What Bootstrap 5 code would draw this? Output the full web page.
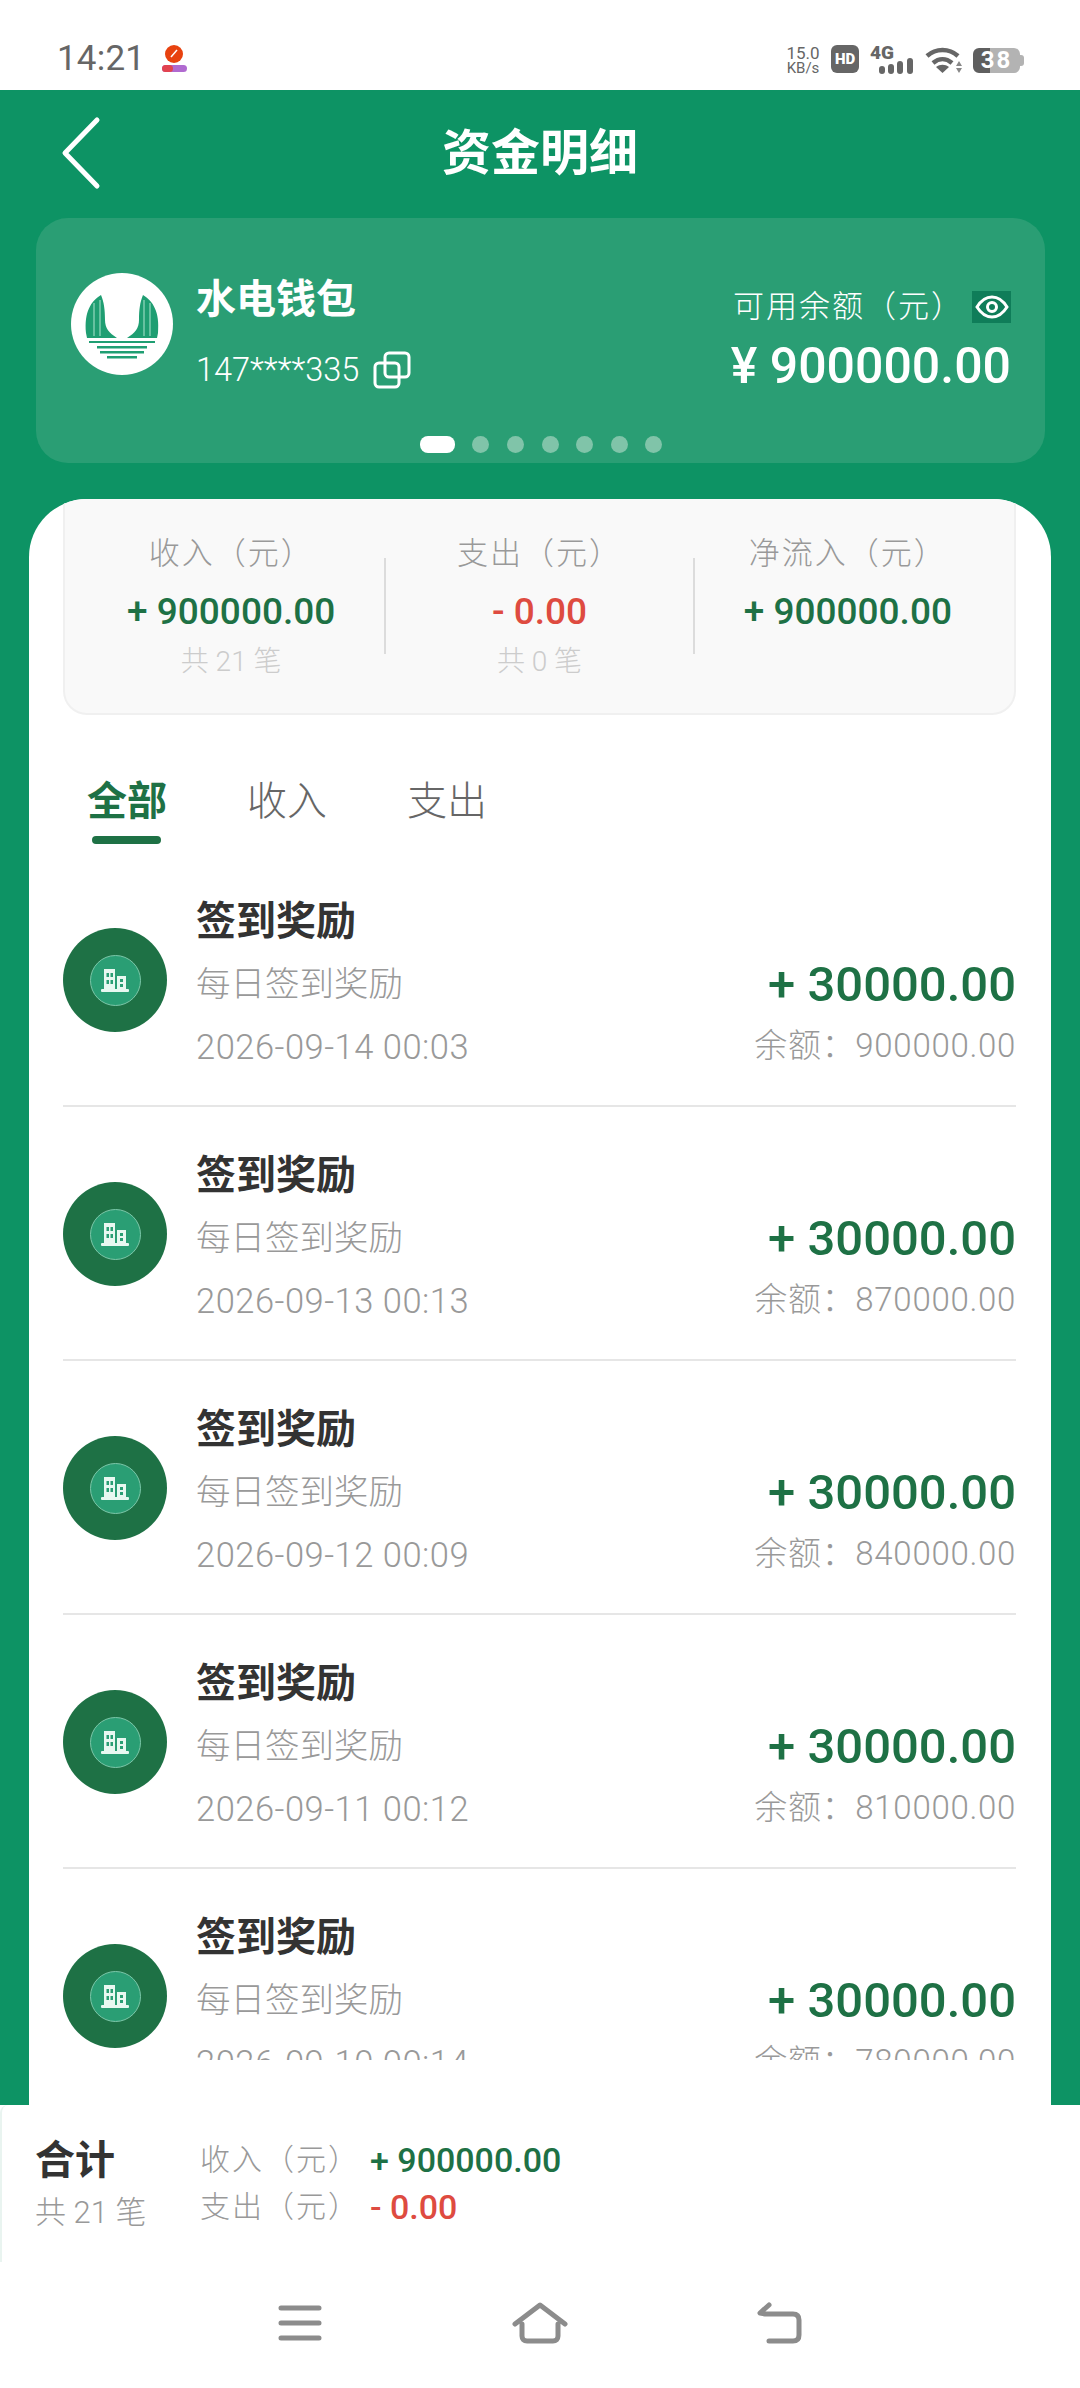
<!DOCTYPE html>
<html lang="zh">
<head>
  <meta charset="UTF-8" />
  <title>资金明细</title>
  <meta name="viewport" content="width=device-width, initial-scale=1">
  <link href="https://cdn.jsdelivr.net/npm/bootstrap@5.3.3/dist/css/bootstrap.min.css" rel="stylesheet">
  <style>
    html, body { margin: 0; background: #fff; }
    body { width: 1080px; height: 2388px; overflow: hidden; font-family: Roboto, "Noto Sans CJK SC", sans-serif; color: #333; }
    .status-row { height: 90px; padding: 44px 56px 0 57px; background: #fff; color: #666; }
    .clock { font-size: 35px; line-height: 30px; letter-spacing: .2px; }
    .speed { width: 36px; margin-left: auto; font-size: 17px; line-height: 18px; text-align: center; }
    .speed small { display: block; font-size: 15px; line-height: 13px; }
    .hd-tag { width: 28px; height: 28px; margin: 1px 0 0 10px; border-radius: 6px; background: #666; color: #fff; font-size: 15px; font-weight: 900; line-height: 28px; text-align: center; }
    .net-tag { position: relative; width: 45px; height: 30px; margin-left: 11px; }
    .net-tag b { position: absolute; left: 0; top: 1px; font-size: 19px; font-weight: 900; line-height: 15px; }
    .wifi-mark { margin: 3px 0 0 10px; }
    .batt { position: relative; width: 47px; height: 25px; margin: 4px 4px 0 10px; border-radius: 6px; background: linear-gradient(90deg, #5f5f5f 36%, #b3b3b3 36%); color: #fff; font-size: 24px; font-weight: 700; line-height: 25px; letter-spacing: 2px; text-align: center; }
    .batt::after { content: ""; position: absolute; left: 47px; top: 7px; width: 4px; height: 11px; border-radius: 0 3px 3px 0; background: #b3b3b3; }
    .green-area { height: 2015px; background: #0d9364; }
    .head-row { position: relative; height: 128px; }
    .back-btn { position: absolute; left: 60px; top: 25px; }
    .head-title { padding-top: 34px; font-size: 49px; font-weight: 700; line-height: 60px; color: #fff; text-align: center; }
    .wallet { height: 245px; margin: 0 35px 36px 36px; padding: 55px 34px 0 35px; border-radius: 32px; background: #2a9e74; color: #fff; }
    .wallet-top { height: 163px; }
    .wallet-logo { width: 102px; height: 102px; flex: none; }
    .wallet-name { margin-left: 23px; }
    .wallet-name h2 { margin: 2px 0 -2px; font-size: 40px; font-weight: 700; line-height: 50px; }
    .phone-line { margin-top: 27px; font-size: 32.5px; font-weight: 300; line-height: 40px; }
    .phone-line svg { margin-left: 14px; }
    .bal-label { font-size: 31px; line-height: 40px; font-weight: 300; letter-spacing: 2px; }
    .bal-row { margin-top: 14px; }
    .eye-box { width: 39px; height: 32px; margin-left: 8px; background: #0f7d59; }
    .bal-num { margin-top: 14px; font-size: 50px; font-weight: 500; line-height: 50px; }
    .dot-row { height: 17px; gap: 17.6px; }
    .dot-row i { width: 17px; height: 17px; border-radius: 50%; background: #80c4a9; }
    .dot-row i.on { width: 35px; border-radius: 8px; background: #fff; }
    .sheet { height: 1606px; margin: 0 29px; padding: 0 35px 0 34px; border-radius: 58px 58px 0 0; background: #fff; overflow: hidden; }
    .sum-box { height: 216px; padding: 0 13px; border: 2px solid #f0f0f0; border-top: 0; border-radius: 0 0 24px 24px; background: #f9f9f9; }
    .sum-col { flex: 1 1 0; padding-top: 35px; text-align: center; }
    .sum-rule { width: 2px; height: 96px; margin-top: 59px; flex: none; background: #dcdcdc; }
    .sum-label { font-size: 31px; line-height: 40px; color: #999; font-weight: 300; letter-spacing: 2px; }
    .sum-val { margin-top: 16px; font-size: 37px; font-weight: 500; line-height: 44px; }
    .sum-count { margin-top: 10px; font-size: 28px; line-height: 36px; color: #ccc; font-weight: 300; }
    .up-text { color: #1e7145; }
    .down-text { color: #de4b40; }
    .tab-row { gap: 80px; height: 138px; padding: 62px 0 0 24px; font-size: 40px; line-height: 50px; color: #666; font-weight: 300; }
    .tab-on { position: relative; font-weight: 700; color: #1e7145; }
    .tab-on::after { content: ""; position: absolute; left: 5px; right: 6px; top: 59px; height: 8px; border-radius: 4px; background: #1e7145; }
    .flow-list { height: 1207px; overflow: hidden; }
    .flow-item { height: 254px; padding-top: 43px; border-bottom: 2px solid #e6e6e6; }
    .coin { width: 104px; height: 104px; margin-top: 32px; flex: none; border-radius: 50%; background: #1e7145; }
    .coin span { width: 51px; height: 51px; border: 1px solid #7cc7a9; border-radius: 50%; background: #2a9e74; }
    .flow-main { margin-left: 29px; }
    .flow-main h3 { margin: 0; font-size: 40px; font-weight: 700; line-height: 52px; color: #333; }
    .flow-main p { margin: 10px 0 0; font-size: 34.5px; font-weight: 300; line-height: 52px; color: #999; }
    .flow-main p + p { margin-top: 11px; letter-spacing: .5px; }
    .flow-side { margin-left: auto; padding-top: 58px; text-align: right; }
    .flow-amt { font-size: 49px; font-weight: 500; line-height: 62px; color: #1e7145; }
    .flow-left { margin-top: 4px; font-size: 33px; font-weight: 300; line-height: 52px; letter-spacing: .7px; color: #999; }
    .total-bar { height: 157px; padding: 33px 0 0 33px; border-left: 2px solid #e9f4f0; border-radius: 8px 8px 0 0; background: #fff; }
    .total-name { width: 165px; }
    .total-name b { display: block; font-size: 40px; line-height: 46px; color: #333; }
    .total-name span { display: block; margin-top: 9px; font-size: 31px; line-height: 40px; font-weight: 300; color: #999; }
    .total-line { height: 47px; font-size: 30px; line-height: 44px; font-weight: 300; letter-spacing: 2px; color: #999; }
    .total-line b { margin-left: 10px; font-size: 34px; font-weight: 500; letter-spacing: 0; }
    .nav-cell { width: 240px; height: 122px; }
  </style>
</head>
<body>
  <div class="status-row d-flex align-items-start">
    <span class="clock">14:21</span>
    <svg class="ms-3" width="27" height="29" viewBox="0 0 27 29"><circle cx="13" cy="10" r="9" fill="#e8420f"/><path d="M10 13l6-7" stroke="#fff" stroke-width="1.500"/><rect x="1" y="21" width="25" height="7" rx="3.500" fill="#b06ad0"/><rect x="1" y="21" width="11" height="7" rx="3.500" fill="#e2434f"/></svg>
    <div class="speed">15.0<small>KB/s</small></div>
    <div class="hd-tag">HD</div>
    <div class="net-tag"><b>4G</b>
      <svg width="45" height="30" viewBox="0 0 45 30"><g fill="#666"><rect x="9" y="22" width="6" height="8" rx="3"/><rect x="18" y="20" width="6" height="10" rx="3"/><rect x="27" y="17" width="6" height="13" rx="3"/><rect x="37" y="14" width="6" height="16" rx="3"/></g></svg>
    </div>
    <svg class="wifi-mark" width="38" height="27" viewBox="0 0 38 27"><g fill="none" stroke="#666" stroke-width="4.500"><path d="M2 9c9-8 22-8 31 0"/><path d="M8 16c6-5 13-5 19 0"/></g><path d="M11 20c4-3 9-3 13 0l-6.500 6z" fill="#666"/><path d="M34 14l3 5h-6zM34 26l3-5h-6z" fill="#888"/></svg>
    <div class="batt">38</div>
  </div>

  <div class="green-area">
    <div class="head-row">
      <svg class="back-btn" width="42" height="76" viewBox="0 0 42 76"><path d="M37 5L5 38l32 33" fill="none" stroke="#fff" stroke-width="5" stroke-linecap="round" stroke-linejoin="round"/></svg>
      <div class="head-title">资金明细</div>
    </div>

    <div class="wallet">
      <div class="wallet-top d-flex">
        <svg class="wallet-logo" viewBox="0 0 102 102"><circle cx="51" cy="51" r="51" fill="#fff"/><g fill="#1f9e72"><path d="M30 22c-10 6-17 17-15 38l1 5h30c-8-5-12-10-12-18 0-10-1-18-4-25z"/><path d="M72 22c10 6 17 17 15 38l-1 5H56c8-5 12-10 12-18 0-10 1-18 4-25z"/><rect x="18" y="68" width="66" height="2"/><rect x="26" y="73" width="50" height="2.500"/><rect x="29" y="78" width="44" height="2.500"/><rect x="36" y="83" width="30" height="2.500"/></g><g stroke="#7fcdb0" stroke-width="1.500"><path d="M23 30v33M29 27v36M73 27v36M79 30v33"/></g></svg>
        <div class="wallet-name">
          <h2>水电钱包</h2>
          <div class="phone-line d-flex align-items-center">147****335
            <svg width="38" height="38" viewBox="0 0 38 38"><g fill="none" stroke="#fff" stroke-width="3"><rect x="12" y="2" width="24" height="24" rx="4"/><rect x="2" y="12" width="24" height="24" rx="4"/></g></svg>
          </div>
        </div>
        <div class="ms-auto text-end">
          <div class="bal-row d-flex align-items-center justify-content-end">
            <span class="bal-label">可用余额（元）</span>
            <span class="eye-box d-flex align-items-center justify-content-center">
              <svg width="34" height="24" viewBox="0 0 34 24"><path d="M2 12C7 4 12 2 17 2s10 2 15 10c-5 8-10 10-15 10S7 20 2 12z" fill="none" stroke="#fff" stroke-width="3"/><circle cx="17" cy="12" r="4.500" fill="none" stroke="#fff" stroke-width="3"/></svg>
            </span>
          </div>
          <div class="bal-num">¥ 900000.00</div>
        </div>
      </div>
      <div class="dot-row d-flex justify-content-center">
        <i class="on"></i><i></i><i></i><i></i><i></i><i></i><i></i>
      </div>
    </div>

    <div class="sheet">
      <div class="sum-box d-flex">
        <div class="sum-col"><div class="sum-label">收入（元）</div><div class="sum-val up-text">+ 900000.00</div><div class="sum-count">共 21 笔</div></div>
        <div class="sum-rule"></div>
        <div class="sum-col"><div class="sum-label">支出（元）</div><div class="sum-val down-text">- 0.00</div><div class="sum-count">共 0 笔</div></div>
        <div class="sum-rule"></div>
        <div class="sum-col"><div class="sum-label">净流入（元）</div><div class="sum-val up-text">+ 900000.00</div></div>
      </div>

      <div class="tab-row d-flex">
        <span class="tab-on">全部</span><span>收入</span><span>支出</span>
      </div>

      <div class="flow-list" id="flowList"></div>
    </div>
  </div>

  <div class="total-bar d-flex">
    <div class="total-name"><b>合计</b><span>共 21 笔</span></div>
    <div>
      <div class="total-line d-flex"><span>收入（元）</span><b class="up-text">+ 900000.00</b></div>
      <div class="total-line d-flex"><span>支出（元）</span><b class="down-text">- 0.00</b></div>
    </div>
  </div>

  <div class="d-flex justify-content-center">
    <div class="nav-cell d-flex align-items-center justify-content-center"><svg width="44" height="36" viewBox="0 0 44 36"><g stroke="#8c8c8c" stroke-width="5" stroke-linecap="round"><path d="M3 3h38M3 18h38M3 33h38"/></g></svg></div>
    <div class="nav-cell d-flex align-items-center justify-content-center"><svg width="56" height="42" viewBox="0 0 56 42"><path d="M3 22L28 3l25 19M10 22v12c0 3 2 5 5 5h26c3 0 5-2 5-5V22" fill="none" stroke="#8c8c8c" stroke-width="5" stroke-linecap="round" stroke-linejoin="round"/></svg></div>
    <div class="nav-cell d-flex align-items-center justify-content-center"><svg width="48" height="42" viewBox="0 0 48 42"><path d="M13 3L4 11l5 1h28c4 0 6 2 6 6v15c0 4-2 6-6 6H13" fill="none" stroke="#8c8c8c" stroke-width="5" stroke-linecap="round" stroke-linejoin="round"/></svg></div>
  </div>

  <script>
    // 流水列表
    const flows = [
      ['2026-09-14 00:03', '900000.00'],
      ['2026-09-13 00:13', '870000.00'],
      ['2026-09-12 00:09', '840000.00'],
      ['2026-09-11 00:12', '810000.00'],
      ['2026-09-10 00:14', '780000.00']
    ];
    const building = '<svg width="28" height="24" viewBox="0 0 28 24"><g fill="#e8f8f1"><path d="M3 1h11v20H3z"/><path d="M16 8h9v13h-9z"/><rect y="21" width="28" height="3" rx="1"/></g><g fill="#2a9e74"><rect x="5.500" y="5" width="2.500" height="4"/><rect x="9.500" y="5" width="2.500" height="4"/><rect x="5.500" y="12" width="2.500" height="4"/><rect x="9.500" y="12" width="2.500" height="4"/><rect x="19" y="11" width="3" height="3"/><rect x="19" y="16" width="3" height="3"/></g></svg>';
    document.getElementById('flowList').innerHTML = flows.map(f => `
      <div class="flow-item d-flex">
        <div class="coin d-flex align-items-center justify-content-center"><span class="d-flex align-items-center justify-content-center">${building}</span></div>
        <div class="flow-main"><h3>签到奖励</h3><p>每日签到奖励</p><p>${f[0]}</p></div>
        <div class="flow-side"><div class="flow-amt">+ 30000.00</div><div class="flow-left">余额：${f[1]}</div></div>
      </div>`).join('');
  </script>
  <script src="https://cdn.jsdelivr.net/npm/bootstrap@5.3.3/dist/js/bootstrap.bundle.min.js"></script>
</body>
</html>
